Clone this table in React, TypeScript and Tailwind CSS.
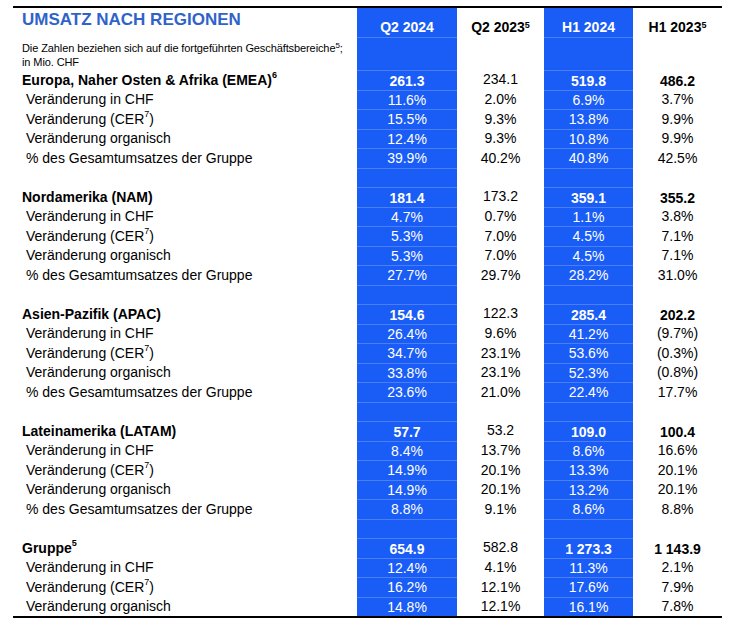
import React from "react";

type Row = [string | React.ReactNode, string, string, string, string];

type Section = {
  title: React.ReactNode;
  total: [string, string, string, string];
  rows: [string, string, string, string][];
  last?: boolean;
};

const CER = (
  <>
    Veränderung (CER<sup className="text-[9px]">7</sup>)
  </>
);

const labels: React.ReactNode[] = [
  "Veränderung in CHF",
  CER,
  "Veränderung organisch",
  "% des Gesamtumsatzes der Gruppe",
];

const sections: Section[] = [
  {
    title: (
      <>
        Europa, Naher Osten &amp; Afrika (EMEA)<sup className="text-[9px]">6</sup>
      </>
    ),
    total: ["261.3", "234.1", "519.8", "486.2"],
    rows: [
      ["11.6%", "2.0%", "6.9%", "3.7%"],
      ["15.5%", "9.3%", "13.8%", "9.9%"],
      ["12.4%", "9.3%", "10.8%", "9.9%"],
      ["39.9%", "40.2%", "40.8%", "42.5%"],
    ],
  },
  {
    title: "Nordamerika (NAM)",
    total: ["181.4", "173.2", "359.1", "355.2"],
    rows: [
      ["4.7%", "0.7%", "1.1%", "3.8%"],
      ["5.3%", "7.0%", "4.5%", "7.1%"],
      ["5.3%", "7.0%", "4.5%", "7.1%"],
      ["27.7%", "29.7%", "28.2%", "31.0%"],
    ],
  },
  {
    title: "Asien-Pazifik (APAC)",
    total: ["154.6", "122.3", "285.4", "202.2"],
    rows: [
      ["26.4%", "9.6%", "41.2%", "(9.7%)"],
      ["34.7%", "23.1%", "53.6%", "(0.3%)"],
      ["33.8%", "23.1%", "52.3%", "(0.8%)"],
      ["23.6%", "21.0%", "22.4%", "17.7%"],
    ],
  },
  {
    title: "Lateinamerika (LATAM)",
    total: ["57.7", "53.2", "109.0", "100.4"],
    rows: [
      ["8.4%", "13.7%", "8.6%", "16.6%"],
      ["14.9%", "20.1%", "13.3%", "20.1%"],
      ["14.9%", "20.1%", "13.2%", "20.1%"],
      ["8.8%", "9.1%", "8.6%", "8.8%"],
    ],
  },
  {
    title: (
      <>
        Gruppe<sup className="text-[9px]">5</sup>
      </>
    ),
    total: ["654.9", "582.8", "1 273.3", "1 143.9"],
    rows: [
      ["12.4%", "4.1%", "11.3%", "2.1%"],
      ["16.2%", "12.1%", "17.6%", "7.9%"],
      ["14.8%", "12.1%", "16.1%", "7.8%"],
    ],
    last: true,
  },
];

const grid = "grid grid-cols-[344px_100px_87px_89px_89px]";
const blue = "bg-[#1a5cf6] text-white border-t border-[#4a7ff7]";

function DataRow({ row, bold }: { row: Row; bold?: boolean }) {
  const [label, a, b, c, d] = row;
  return (
    <div className={`${grid} h-[19.5px] text-[14px] leading-none`}>
      <div
        className={`flex items-center ${bold ? "pl-[9px] font-bold" : "pl-[13px]"}`}
      >
        {label}
      </div>
      <div className={`${blue} flex items-center justify-center ${bold ? "font-bold pt-[2px]" : ""}`}>
        {a}
      </div>
      <div className={`flex items-center justify-center ${bold ? "pb-[1px]" : ""}`}>{b}</div>
      <div className={`${blue} flex items-center justify-center ${bold ? "font-bold pt-[2px]" : ""}`}>
        {c}
      </div>
      <div className={`flex items-center justify-center ${bold ? "font-bold pt-[2px]" : ""}`}>
        {d}
      </div>
    </div>
  );
}

function Spacer() {
  return (
    <div className={`${grid} h-[19.5px]`}>
      <div />
      <div className={blue} />
      <div />
      <div className={blue} />
      <div />
    </div>
  );
}

export default function App() {
  return (
    <div
      className="w-[733px] h-[632px] bg-white pt-[6px] pl-[13px] text-black"
      style={{ fontFamily: '"Liberation Sans", Arial, sans-serif' }}
    >
      <div className="w-[709px] border-t-2 border-b-2 border-black">
        {/* header */}
        <div className={`${grid} h-[29px] text-[14px] font-bold leading-none`}>
          <div className="pl-[9px] pt-[3px] text-[17px] text-[#2f63c9]">
            UMSATZ NACH REGIONEN
          </div>
          <div className="bg-[#1a5cf6] text-white flex items-end justify-center pb-[3px]">
            Q2 2024
          </div>
          <div className="flex items-end justify-center pb-[3px]">
            <span>
              Q2 2023<sup className="text-[9px]">5</sup>
            </span>
          </div>
          <div className="bg-[#1a5cf6] text-white flex items-end justify-center pb-[3px]">
            H1 2024
          </div>
          <div className="flex items-end justify-center pb-[3px]">
            <span>
              H1 2023<sup className="text-[9px]">5</sup>
            </span>
          </div>
        </div>
        <div className={`${grid} h-[33px]`}>
          <div className="pl-[9px] pt-[4px] text-[11px] leading-[14px] tracking-[-0.1px]">
            Die Zahlen beziehen sich auf die fortgeführten Geschäftsbereiche
            <sup className="text-[8px]">5</sup>;
            <br />
            in Mio. CHF
          </div>
          <div className={blue} />
          <div />
          <div className={blue} />
          <div />
        </div>

        {sections.map((s, i) => (
          <React.Fragment key={i}>
            <DataRow row={[s.title, ...s.total]} bold />
            {s.rows.map((r, j) => (
              <DataRow key={j} row={[labels[j], ...r]} />
            ))}
            {!s.last && <Spacer />}
          </React.Fragment>
        ))}
      </div>
    </div>
  );
}
